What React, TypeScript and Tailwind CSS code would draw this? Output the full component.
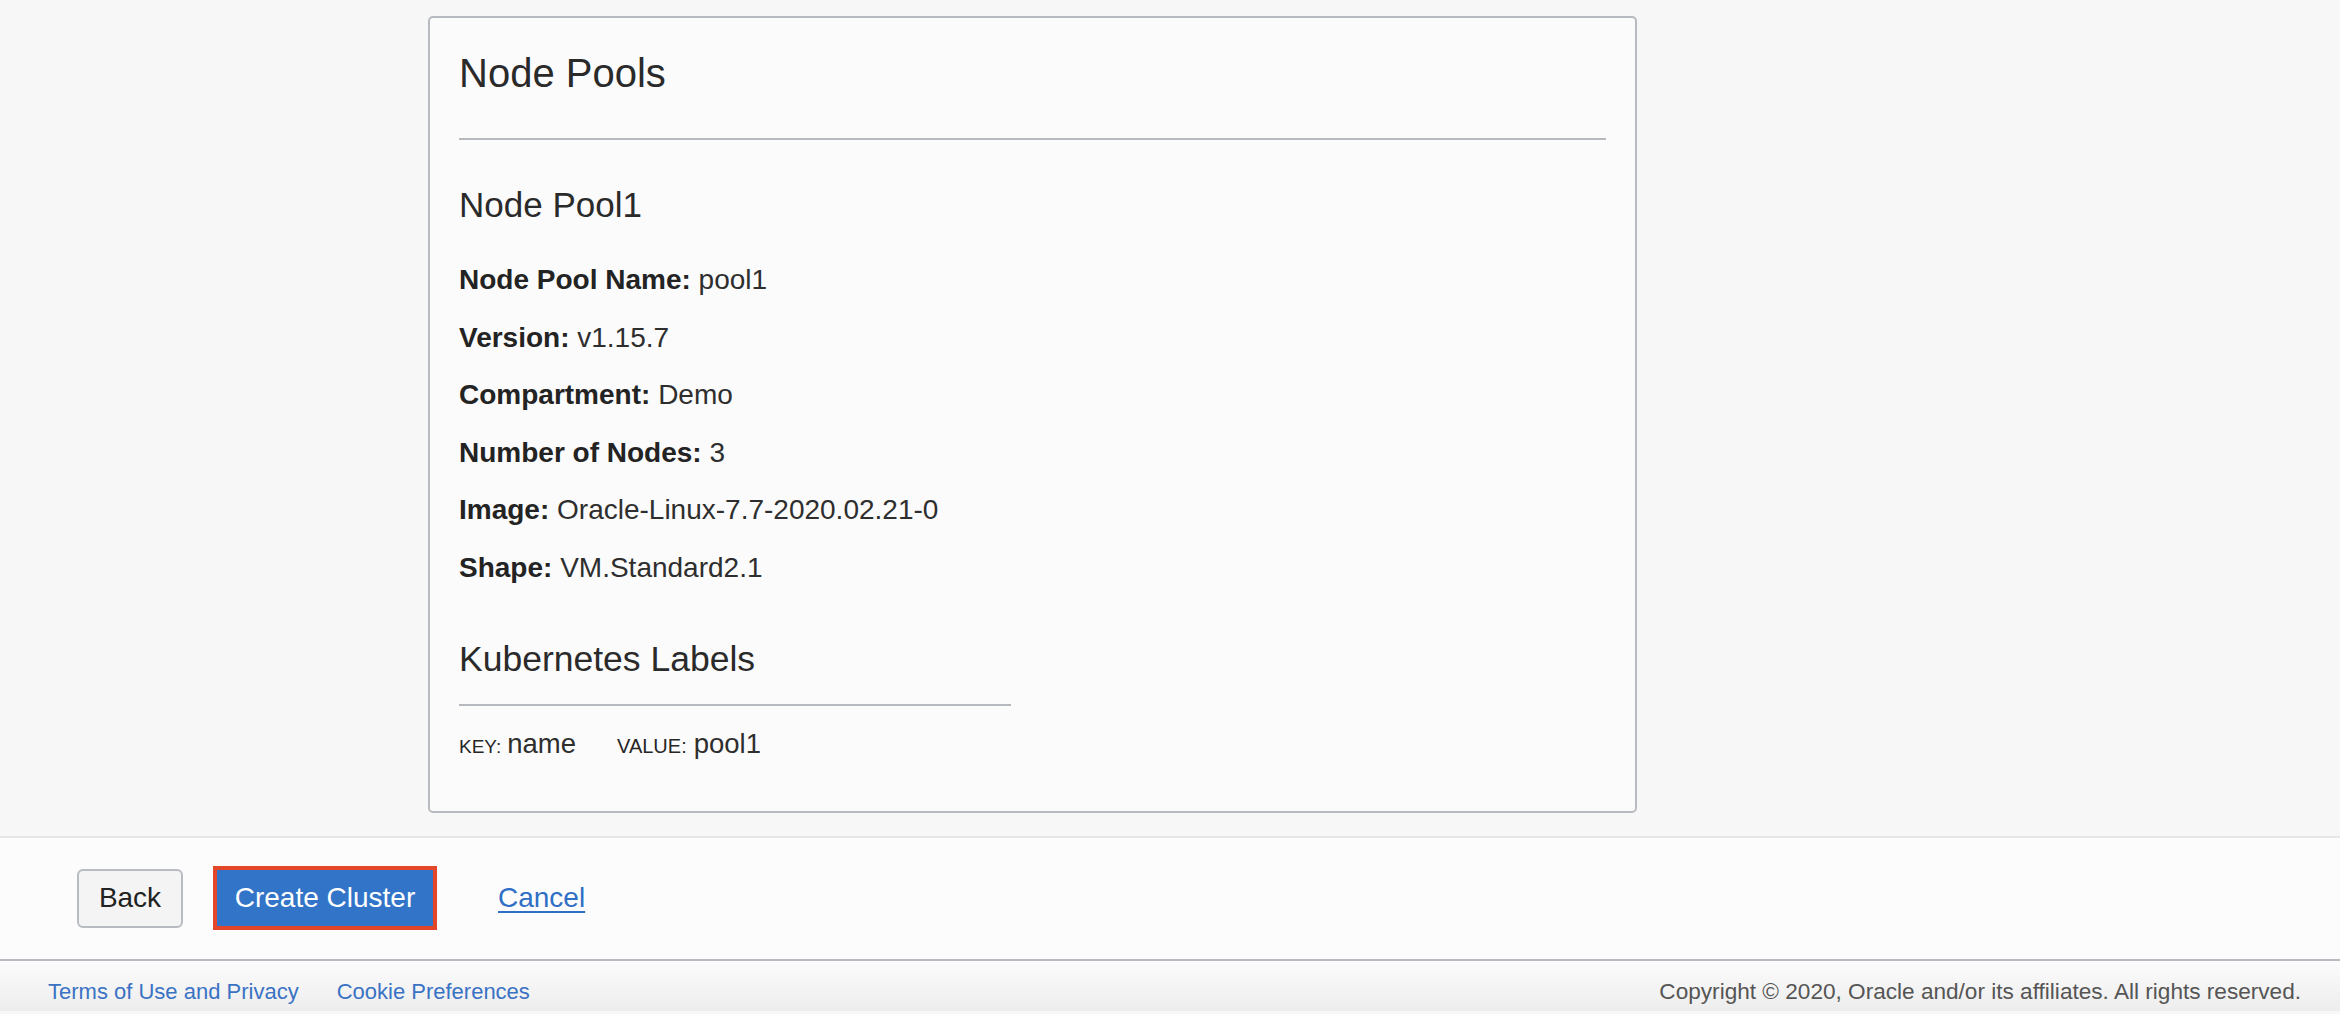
import React from 'react';

const fields = [
  { label: 'Node Pool Name:', value: 'pool1' },
  { label: 'Version:', value: 'v1.15.7' },
  { label: 'Compartment:', value: 'Demo' },
  { label: 'Number of Nodes:', value: '3' },
  { label: 'Image:', value: 'Oracle-Linux-7.7-2020.02.21-0' },
  { label: 'Shape:', value: 'VM.Standard2.1' },
];

export default function App() {
  return (
    <div className="min-h-screen bg-[#f7f7f7] text-[#262626] font-['Liberation_Sans',Arial,sans-serif]">
      <div className="pt-[16px] pb-[23px]">
        <div className="ml-[428px] w-[1209px] rounded-[5px] border-2 border-[#b7bbc0] bg-[#fbfbfb] px-[29px] pt-[35px] pb-[53px]">
          <h2 className="text-[40px] leading-none text-[#2a2a2a]">Node Pools</h2>
          <div className="mt-[45px] h-[2px] bg-[#b6babf]" />

          <h3 className="mt-[47px] text-[35px] leading-none text-[#2a2a2a]">Node Pool1</h3>
          <div className="mt-[44px] flex flex-col gap-[29.6px]">
            {fields.map((f) => (
              <div key={f.label} className="text-[28px] leading-none">
                <span className="font-bold text-[#232323]">{f.label}</span>{' '}
                <span className="text-[#2e2e2e]">{f.value}</span>
              </div>
            ))}
          </div>

          <h3 className="mt-[60px] text-[35.5px] leading-none text-[#2a2a2a]">Kubernetes Labels</h3>
          <div className="mt-[27px] h-[2px] w-[552px] bg-[#b6babf]" />
          <div className="mt-[24px] flex items-baseline leading-none">
            <span className="text-[19px] text-[#262626]">KEY:</span>
            <span className="ml-[6px] text-[27.5px] text-[#2e2e2e]">name</span>
            <span className="ml-[41px] text-[20px] text-[#262626]">VALUE:</span>
            <span className="ml-[7px] text-[27.5px] text-[#2e2e2e]">pool1</span>
          </div>
        </div>
      </div>

      <div className="flex h-[123px] items-center border-t-2 border-[#e6e6e6] bg-[#fcfcfc] pl-[77px]">
        <button className="flex h-[59px] w-[106px] items-center justify-center rounded-[6px] border-2 border-[#b8bcc1] bg-[#f4f4f4] text-[28px] text-[#222]">
          Back
        </button>
        <button className="ml-[30px] flex h-[64px] w-[224px] items-center justify-center border-[4px] border-[#e4462a] bg-[#3174c8] text-[28px] text-white">
          Create Cluster
        </button>
        <a href="#" className="ml-[61px] text-[28px] text-[#2f6fc6] underline underline-offset-[4px]">
          Cancel
        </a>
      </div>

      <div className="flex h-[52px] items-start justify-between border-t-2 border-[#b7bbc1] bg-gradient-to-b from-[#fcfcfc] to-[#ededed] pl-[48px] pr-[39px] pt-[20px] text-[22px] leading-none">
        <div className="flex gap-[38px] text-[#3a72c4]">
          <a href="#">Terms of Use and Privacy</a>
          <a href="#">Cookie Preferences</a>
        </div>
        <div className="text-[22.6px] text-[#555]">Copyright © 2020, Oracle and/or its affiliates. All rights reserved.</div>
      </div>
    </div>
  );
}
